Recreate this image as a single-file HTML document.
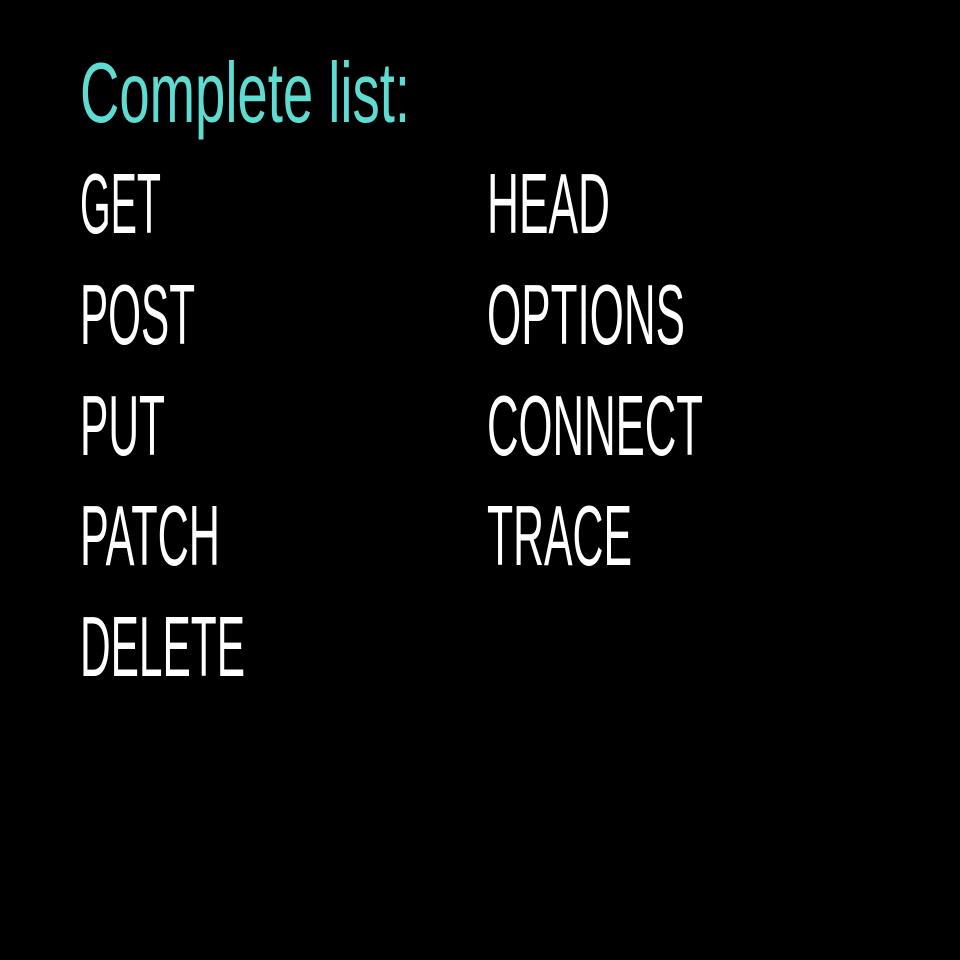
<!DOCTYPE html>
<html><head><meta charset="utf-8"><style>
html,body{margin:0;padding:0;background:#000;width:960px;height:960px;overflow:hidden}
svg{display:block}
text{font-family:"Liberation Sans",sans-serif;font-size:85px;fill:#fff}
</style></head><body>
<svg width="960" height="960" viewBox="0 0 960 960">
<rect width="960" height="960" fill="#000"/>
<text x="80" y="122" textLength="330" lengthAdjust="spacingAndGlyphs" style="fill:#5fdcd2">Complete list:</text>
<text x="80" y="233" textLength="81" lengthAdjust="spacingAndGlyphs">GET</text>
<text x="80" y="344" textLength="115" lengthAdjust="spacingAndGlyphs">POST</text>
<text x="80" y="455" textLength="85" lengthAdjust="spacingAndGlyphs">PUT</text>
<text x="80" y="565" textLength="140" lengthAdjust="spacingAndGlyphs">PATCH</text>
<text x="80" y="676" textLength="165" lengthAdjust="spacingAndGlyphs">DELETE</text>
<text x="487" y="233" textLength="123" lengthAdjust="spacingAndGlyphs">HEAD</text>
<text x="487" y="344" textLength="198" lengthAdjust="spacingAndGlyphs">OPTIONS</text>
<text x="487" y="455" textLength="216" lengthAdjust="spacingAndGlyphs">CONNECT</text>
<text x="487" y="565" textLength="145" lengthAdjust="spacingAndGlyphs">TRACE</text>
</svg>
</body></html>
